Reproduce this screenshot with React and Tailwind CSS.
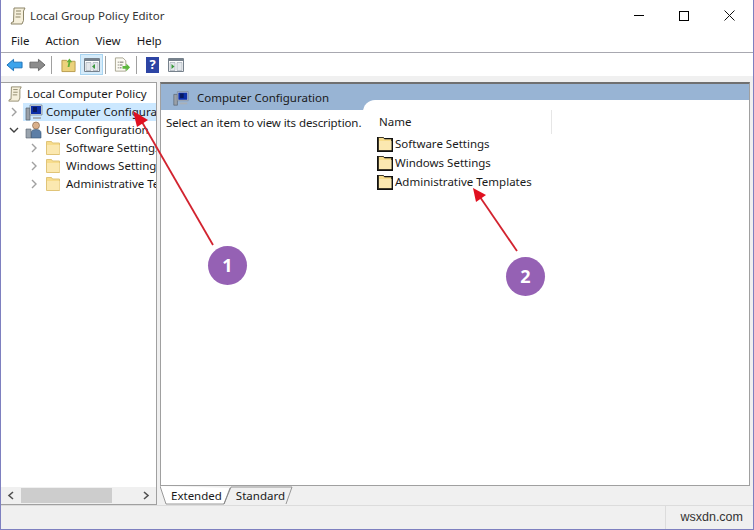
import React from 'react';

const Chevron = ({ open }) => (
	<svg width="10" height="10" viewBox="0 0 10 10" fill="none" stroke={open ? '#404040' : '#a0a0a0'} strokeWidth="1.4">
		{open ? <path d="M1 3l4 4 4-4" /> : <path d="M3 1l4 4-4 4" />}
	</svg>
);

const Folder = ({ size = 16, dark }) => (
	<svg width={size} height={size} viewBox="0 0 16 16">
		{dark && <path d="M0 1h6l1 1h9v14H0z" fill="#111" />}
		<path d="M1.500 14.500V1.500h5l1 1.500h7v11.500z" fill="#f7dc8c" stroke={dark ? '#111' : '#e0c478'} strokeWidth={dark ? 0.6 : 1} />
		<path d="M2 5h12.500v9H2z" fill="#fbe8b0" />
	</svg>
);

const Scroll = ({ size = 18 }) => (
	<svg width={size} height={size} viewBox="0 0 18 18" fill="none">
		<path d="M5 1h11l-1.500 3v9.500L13 17H2l1-2H4.500z" fill="#f6f0dc" stroke="#8c8568" strokeWidth="1" />
		<path d="M7 4h5M7 7h5M6.500 10h5" stroke="#8c8568" strokeWidth="1" />
	</svg>
);

const Computer = () => (
	<svg width="18" height="18" viewBox="0 0 18 18">
		<path d="M1 5h4v12H1z" fill="#9aa0a8" stroke="#55606c" strokeWidth="0.7" />
		<path d="M5 2h12v10H5z" fill="#dfe4ea" stroke="#6c7884" strokeWidth="0.7" />
		<path d="M6 3h10v8H6z" fill="#0d2fa8" />
		<path d="M8 4h4v5H8z" fill="#091a60" />
		<path d="M8 14h8v2H8z" fill="#a8b0b8" />
	</svg>
);

const Users = () => (
	<svg width="18" height="18" viewBox="0 0 18 18">
		<circle cx="11" cy="4.500" r="3.500" fill="#d9b08c" stroke="#7a5a40" strokeWidth="0.6" />
		<path d="M6 17v-5q0-3.500 5-3.500t5 3.500v5z" fill="#5c7ea6" stroke="#33506e" strokeWidth="0.6" />
		<path d="M1 8h5v9H1z" fill="#9aa4ae" stroke="#55606c" strokeWidth="0.6" />
	</svg>
);

const PaneIcon = ({ mark, arrow }) => (
	<svg width="16" height="16" viewBox="0 0 16 16">
		<path d="M.500 1.500h15v13H.500z" fill="#fff" stroke="#76818c" />
		<path d="M1 2h14v2H1z" fill="#76818c" />
		<path d="M2 5.500h5v8H2zM9 5.500h5v8H9z" fill="#e4e8ec" stroke="#9aa4ae" strokeWidth="0.6" />
		<path d={arrow} fill={mark} />
	</svg>
);

const TreeRow = ({ indent, chevron, open, icon, label, selected }) => (
	<div className="flex h-[18px] items-center whitespace-nowrap">
		<div className={`flex shrink-0 justify-center ${indent ? 'w-[42px] pl-[24px]' : 'w-[22px] pl-[3px]'}`}>
			{chevron && <Chevron open={open} />}
		</div>
		<div className={`flex h-[18px] flex-1 items-center overflow-hidden ${selected ? 'bg-[#cce8ff]' : ''}`}>
			<div className="ml-[2px] flex w-[21px] shrink-0 justify-start">{icon}</div>
			<span>{label}</span>
		</div>
	</div>
);

const ToolDivider = ({ className }) => <div className={`h-[18px] w-px bg-[#a0a0a0] ${className}`} />;

const Annotations = () => (
	<svg className="pointer-events-none absolute left-0 top-0" width="754" height="530" viewBox="0 0 754 530">
		<path d="M212 245L141 122" stroke="#d2232f" strokeWidth="1.800" fill="none" />
		<path d="M132 111l15 9-11 7z" fill="#e01020" />
		<path d="M516 251L479 197" stroke="#d2232f" strokeWidth="1.800" fill="none" />
		<path d="M472 188l13 7-10 7z" fill="#e01020" />
	</svg>
);

const Badge = ({ className, children }) => (
	<div className={`absolute flex h-[39px] w-[39px] items-center justify-center rounded-full bg-[#9561b4] text-[18px] font-bold text-white ${className}`}>
		{children}
	</div>
);

export default function App() {
	return (
		<div
			className="relative flex h-[530px] w-[754px] flex-col overflow-hidden border border-t-0 border-[#7e80c0] bg-[#f0f0f0] text-[11.5px] text-[#1a1a1a]"
			style={{ fontFamily: '"Noto Sans", sans-serif' }}
		>
			{/* title */}
			<div className="flex h-[31px] shrink-0 items-center bg-white pl-[8px]">
				<Scroll />
				<span className="ml-[3px] text-[#333]">Local Group Policy Editor</span>
				<div className="ml-auto flex items-center gap-[35px] pr-[18px]">
					<div className="h-px w-[10px] bg-black" />
					<div className="h-[10px] w-[10px] border border-black" />
					<svg width="11" height="11" viewBox="0 0 11 11" stroke="#111" strokeWidth="1">
						<path d="M.500.500l10 10M10.500.500l-10 10" />
					</svg>
				</div>
			</div>
			{/* menu */}
			<div className="flex h-[22px] shrink-0 items-center gap-[16px] border-b border-[#a8a8b0] bg-white pb-[2px] pl-[10px]">
				<span>File</span>
				<span>Action</span>
				<span>View</span>
				<span>Help</span>
			</div>
			{/* toolbar */}
			<div className="flex h-[23px] shrink-0 items-center bg-white pl-[5px]">
				<svg width="17" height="16" viewBox="0 0 18 16">
					<path d="M1 8l7-6v3h9v6H8v3z" fill="#3ca4ec" stroke="#1a70b8" />
				</svg>
				<svg className="ml-[6px]" width="17" height="16" viewBox="0 0 18 16">
					<path d="M17 8l-7-6v3H1v6h9v3z" fill="#8c8c8c" stroke="#666" />
				</svg>
				<ToolDivider className="ml-[5px]" />
				<div className="ml-[9px]">
					<svg width="15" height="16" viewBox="0 0 16 16">
						<path d="M1 3h5l1 1h8v11H1z" fill="#ecd27c" stroke="#b89a4c" />
						<path d="M7 10l1-5H6l3-4 3 4h-2l-1 5z" fill="#62b038" />
					</svg>
				</div>
				<div className="ml-[4px] flex h-[21px] w-[23px] items-center justify-center border border-[#a8d4f0] bg-[#d5ebfa]">
					<PaneIcon mark="#3c9a3c" arrow="M11 7v5l-3-2.500z" />
				</div>
				<ToolDivider className="ml-[2px]" />
				<div className="ml-[8px]">
					<svg width="17" height="16" viewBox="0 0 18 16">
						<path d="M1.500.500h8l3 3v11h-11z" fill="#fbfaf2" stroke="#a8a490" />
						<path d="M4 5h1M6 5h4M4 8h1M6 8h3M4 11h1M6 11h2" stroke="#68645a" />
						<path d="M9 9h4V6.500l4 4-4 4V12H9z" fill="#5cb83c" />
					</svg>
				</div>
				<ToolDivider className="ml-[5px]" />
				<div className="ml-[9px] flex h-[16px] w-[13px] items-center justify-center bg-[#2c44a4] text-[13px] font-bold leading-none text-white">
					?
				</div>
				<div className="ml-[9px]">
					<PaneIcon mark="#3c9a3c" arrow="M3.500 7v5l3-2.500z" />
				</div>
			</div>
			{/* body */}
			<div className="flex min-h-0 flex-1 bg-[#f0f0f0] pt-[6px]">
				<div className="flex h-[423px] w-[156px] shrink-0 flex-col border-y border-r border-[#a0a0a0] bg-white">
					<div className="min-h-0 flex-1 overflow-hidden pt-[2px]">
						<div className="flex h-[18px] items-center whitespace-nowrap pl-[6px]">
							<Scroll size={16} />
							<span className="ml-[4px]">Local Computer Policy</span>
						</div>
						<TreeRow chevron icon={<Computer />} label="Computer Configuration" selected />
						<TreeRow chevron open icon={<Users />} label="User Configuration" />
						<TreeRow indent chevron icon={<Folder />} label="Software Settings" />
						<TreeRow indent chevron icon={<Folder />} label="Windows Settings" />
						<TreeRow indent chevron icon={<Folder />} label="Administrative Templates" />
					</div>
					<div className="flex h-[17px] shrink-0 items-center bg-[#f0f0f0] px-[6px]">
						<svg width="8" height="9" viewBox="0 0 8 9" fill="none" stroke="#505050" strokeWidth="1.600">
							<path d="M6 1L2 4.500 6 8" />
						</svg>
						<div className="ml-[6px] h-[15px] w-[91px] bg-[#cdcdcd]" />
						<svg className="ml-auto" width="8" height="9" viewBox="0 0 8 9" fill="none" stroke="#505050" strokeWidth="1.600">
							<path d="M2 1l4 3.500L2 8" />
						</svg>
					</div>
				</div>
				<div className="ml-[3px] flex w-[590px] shrink-0 flex-col">
					<div className="flex h-[404px] shrink-0 flex-col border border-t-2 border-[#a0a0a0] border-t-[#707070] bg-white">
						<div className="flex h-[26px] shrink-0 items-center bg-[#98b4d4] pl-[11px] pt-[1px]">
							<div className="scale-[0.9]">
								<Computer />
							</div>
							<span className="ml-[7px]">Computer Configuration</span>
						</div>
						<div className="flex min-h-0 flex-1">
							<div className="w-[202px] shrink-0 whitespace-nowrap pl-[5px] pt-[4px] tracking-[-0.1px]">Select an item to view its description.</div>
							<div className="-mt-[10px] flex-1 rounded-tl-xl bg-white pl-[14px] pt-[10px]">
								<div className="flex h-[24px] w-[175px] items-center border-r border-[#e6e6e6] pl-[2px]">Name</div>
								<div className="flex h-[19px] items-center">
									<Folder dark />
									<span className="ml-[2px]">Software Settings</span>
								</div>
								<div className="flex h-[19px] items-center">
									<Folder dark />
									<span className="ml-[2px]">Windows Settings</span>
								</div>
								<div className="flex h-[19px] items-center">
									<Folder dark />
									<span className="ml-[2px]">Administrative Templates</span>
								</div>
							</div>
						</div>
					</div>
					{/* tabs */}
					<div className="relative flex h-[19px] items-center pt-[1px]">
						<svg className="absolute left-0 top-0" width="140" height="19" viewBox="0 0 140 19" fill="none">
							<path d="M0 0l6 18h58l6-16" fill="#fff" />
							<path d="M0 0l6 18h58l6-16" stroke="#808080" strokeWidth="0.8" />
							<path d="M64 18l7-17h61l-6 17" stroke="#808080" strokeWidth="0.8" />
						</svg>
						<span className="relative ml-[11px]">Extended</span>
						<span className="relative ml-[14px]">Standard</span>
					</div>
				</div>
			</div>
			{/* status */}
			<div className="flex h-[24px] shrink-0 items-center justify-end border-t border-[#dcdcdc] bg-[#f0f0f0] pr-[10px]">
				<div className="flex h-full w-[78px] items-center justify-end border-l border-[#dcdcdc] text-[12.5px] text-[#333]" style={{ fontFamily: '"Liberation Sans", sans-serif' }}>
					wsxdn.com
				</div>
			</div>
			<Annotations />
			<Badge className="left-[207px] top-[246px]">1</Badge>
			<Badge className="left-[505px] top-[257px]">2</Badge>
		</div>
	);
}
